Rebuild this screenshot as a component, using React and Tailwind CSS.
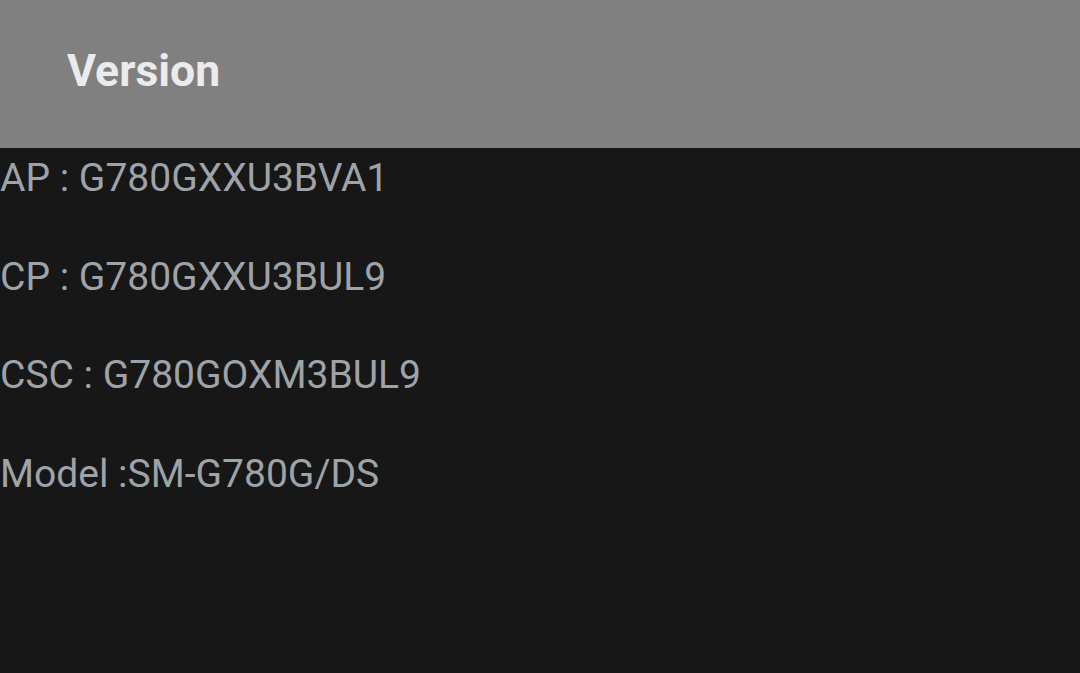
const rows = [
  "AP : G780GXXU3BVA1",
  "CP : G780GXXU3BUL9",
  "CSC : G780GOXM3BUL9",
  "Model :SM-G780G/DS",
];

export default function App() {
  return (
    <div className="w-[1080px] h-[673px] overflow-hidden bg-[#171717]" style={{ fontFamily: "Roboto, 'Noto Sans', sans-serif" }}>
      {/* Header */}
      <div className="h-[148px] bg-[#808080] flex items-center pl-[67px]">
        <h1 className="text-[44.5px] font-bold text-[#ebebeb] leading-none pb-[6px]">Version</h1>
      </div>

      {/* Version rows */}
      <div className="flex flex-col gap-[50.5px] pt-[6px]">
        {rows.map((row) => (
          <p key={row} className="text-[39px] leading-[48px] text-[#9ea3a8] whitespace-pre">
            {row}
          </p>
        ))}
      </div>
    </div>
  );
}
